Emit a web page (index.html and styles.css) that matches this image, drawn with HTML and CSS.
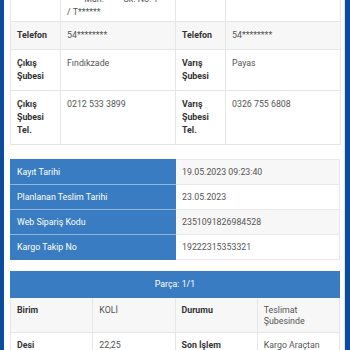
FILE: index.html
```html
<!DOCTYPE html>
<html>
<head>
<meta charset="utf-8">
<link rel="stylesheet" href="styles.css">
</head>
<body>
<div class="frame">
  <div class="panel">
    <table class="info">
      <colgroup><col class="c-lab"><col class="c-val"><col class="c-lab"><col class="c-val"></colgroup>
      <tr class="first">
        <th></th>
        <td>**** Mah. **** Sk. No: 1<br>/ T******</td>
        <th></th>
        <td></td>
      </tr>
      <tr class="alt">
        <th>Telefon</th>
        <td>54********</td>
        <th>Telefon</th>
        <td>54********</td>
      </tr>
      <tr>
        <th>Çıkış Şubesi</th>
        <td>Fındıkzade</td>
        <th>Varış Şubesi</th>
        <td>Payas</td>
      </tr>
      <tr>
        <th>Çıkış Şubesi Tel.</th>
        <td>0212 533 3899</td>
        <th>Varış Şubesi Tel.</th>
        <td>0326 755 6808</td>
      </tr>
    </table>

    <table class="dates">
      <tr class="alt"><th>Kayıt Tarihi</th><td>19.05.2023 09:23:40</td></tr>
      <tr><th>Planlanan Teslim Tarihi</th><td>23.05.2023</td></tr>
      <tr class="alt"><th>Web Sipariş Kodu</th><td>2351091826984528</td></tr>
      <tr><th>Kargo Takip No</th><td>19222315353321</td></tr>
    </table>

    <table class="parts">
      <tr><th class="head" colspan="4">Parça: 1/1</th></tr>
      <tr class="alt">
        <th>Birim</th><td>KOLİ</td><th>Durumu</th><td>Teslimat Şubesinde</td>
      </tr>
      <tr>
        <th>Desi</th><td>22,25</td><th>Son İşlem</th><td>Kargo Araçtan İndirildi</td>
      </tr>
    </table>
  </div>
</div>
</body>
</html>
```

FILE: styles.css
```css
html, body {
  margin: 0;
  padding: 0;
  height: 100%;
  overflow: hidden;
}
body {
  background: #0c4c9c;
  font-family: Roboto, "Noto Sans", sans-serif;
  font-size: 8.8px;
  color: #555;
}
.frame {
  height: 100%;
  padding: 0 5px 0 4px;
}
.panel {
  background: #fff;
  height: 100%;
  padding: 0 5px 0 6px;
  border-right: 1px solid #d6e4f4;
  overflow: hidden;
}
table {
  width: 330px;
  border-collapse: collapse;
  table-layout: fixed;
}
th, td {
  text-align: left;
  vertical-align: top;
  line-height: 13px;
  padding: 7px 6px 7px;
  border: 1px solid #e6e6e6;
  font-weight: normal;
}
th {
  font-weight: bold;
  color: #333;
}
.info {
  margin-top: -15px;
}
.info .c-lab { width: 50px; }
.info .c-val { width: 115px; }
.info .first td, .info .first th { padding-bottom: 2px; }
tr.alt th, tr.alt td { background: #f7f7f7; }

.dates {
  margin-top: 14px;
}
.dates th, .dates td {
  padding: 6px 5px 5px 6px;
  border-color: #e9e9e9;
}
.dates th {
  width: 153px;
  background: #3a7cc1 !important;
  color: #fff;
  font-weight: normal;
  border: 1px solid #8fb4de;
  border-left-color: #3a7cc1;
  border-right-color: #3a7cc1;
}
.dates tr:first-child th { border-top-color: #3a7cc1; }
.dates tr:last-child th { border-bottom-color: #3a7cc1; }

.parts {
  margin-top: 11px;
}
.parts th, .parts td {
  line-height: 11px;
  padding: 7px 6px 5px;
}
.parts th.head {
  background: #3a7cc1;
  color: #fff;
  font-weight: normal;
  text-align: center;
  line-height: 13px;
  padding: 6px;
  border-color: #3a7cc1;
}
```
